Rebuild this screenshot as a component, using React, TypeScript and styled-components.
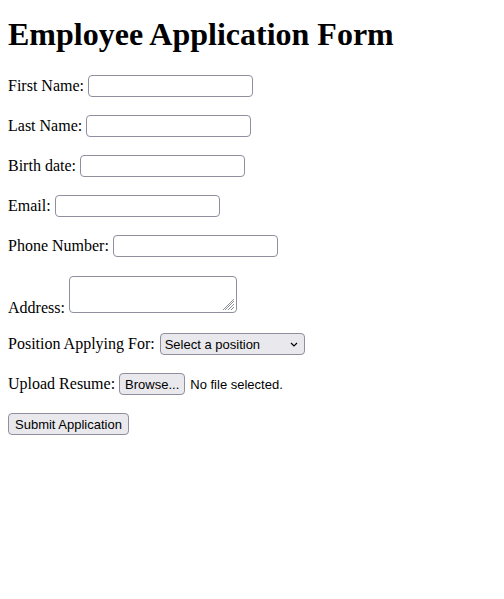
import React from "react";
import styled, { createGlobalStyle } from "styled-components";

const Global = createGlobalStyle`
  html, body { background: #fff; }
  body {
    margin: 8px;
    font-family: "Liberation Serif", "Times New Roman", serif;
    font-size: 16px;
    color: #000;
  }
`;

const Title = styled.h1`
  font-size: 32px;
  font-weight: bold;
  margin: 8px 0 21px;
`;

const Form = styled.form`
  display: block;
`;

const Row = styled.p`
  margin: 16px 0;
`;

const Label = styled.label``;

const TextInput = styled.input`
  box-sizing: border-box;
  width: 165px;
  height: 22px;
  border: 1px solid #8f8f9d;
  border-radius: 4px;
  background: #fff;
  padding: 0 4px;
  margin: 1px 0;
  font-family: "Liberation Sans", sans-serif;
  font-size: 13px;
  vertical-align: baseline;
`;

const AreaWrap = styled.span`
  position: relative;
  display: inline-block;
  vertical-align: baseline;
  margin-top: 2px;
`;

const Area = styled.textarea`
  display: block;
  box-sizing: border-box;
  width: 168px;
  height: 37px;
  border: 1px solid #8f8f9d;
  border-radius: 4px;
  margin: 0;
  padding: 2px;
  font-family: "Liberation Sans", sans-serif;
  font-size: 13px;
  resize: none;
`;

const Grip = styled.svg`
  position: absolute;
  right: 2px;
  bottom: 2px;
  pointer-events: none;
`;

const SelectWrap = styled.span`
  position: relative;
  display: inline-block;
  margin: 0 0 1px 1px;
`;

const Select = styled.select`
  appearance: none;
  box-sizing: border-box;
  width: 145px;
  height: 22px;
  border: 1px solid #8f8f9d;
  border-radius: 4px;
  background: #e9e9ed;
  color: #000;
  padding: 0 20px 0 4px;
  margin: 0;
  font-family: "Liberation Sans", sans-serif;
  font-size: 13px;
`;

const Chevron = styled.svg`
  position: absolute;
  right: 7px;
  top: 9px;
  pointer-events: none;
`;

const Button = styled.button<{ $pad?: number }>`
  box-sizing: border-box;
  height: 22px;
  border: 1px solid #8f8f9d;
  border-radius: 4px;
  background: #e9e9ed;
  color: #000;
  padding: 0 ${(p) => p.$pad ?? 5}px;
  margin: 1px 0;
  font-family: "Liberation Sans", sans-serif;
  font-size: 13px;
`;

const FileText = styled.span`
  font-family: "Liberation Sans", sans-serif;
  font-size: 13px;
  margin-left: 5px;
`;

export default function App() {
  return (
    <>
      <Global />
      <Title>Employee Application Form</Title>
      <Form onSubmit={(e) => e.preventDefault()}>
        <Row>
          <Label>First Name: </Label>
          <TextInput type="text" />
        </Row>
        <Row>
          <Label>Last Name: </Label>
          <TextInput type="text" />
        </Row>
        <Row>
          <Label>Birth date: </Label>
          <TextInput type="text" />
        </Row>
        <Row>
          <Label>Email: </Label>
          <TextInput type="text" />
        </Row>
        <Row>
          <Label>Phone Number: </Label>
          <TextInput type="text" />
        </Row>
        <Row>
          <Label>Address: </Label>
          <AreaWrap>
            <Area />
            <Grip width="12" height="12" viewBox="0 0 12 12">
              <path
                d="M11 2 L2 11 M11 5 L5 11 M11 8 L8 11 M11 0 L0 11"
                stroke="#8f8f9d"
                strokeWidth="1"
                fill="none"
              />
            </Grip>
          </AreaWrap>
        </Row>
        <Row>
          <Label>Position Applying For: </Label>
          <SelectWrap>
            <Select defaultValue="">
              <option value="">Select a position</option>
            </Select>
            <Chevron width="8" height="5" viewBox="0 0 8 5">
              <path d="M1 1 L4 4 L7 1" fill="none" stroke="#000" strokeWidth="1.2" />
            </Chevron>
          </SelectWrap>
        </Row>
        <Row>
          <Label>Upload Resume: </Label>
          <Button type="button">Browse...</Button>
          <FileText>No file selected.</FileText>
        </Row>
        <Row>
          <Button type="submit" $pad={6}>
            Submit Application
          </Button>
        </Row>
      </Form>
    </>
  );
}
